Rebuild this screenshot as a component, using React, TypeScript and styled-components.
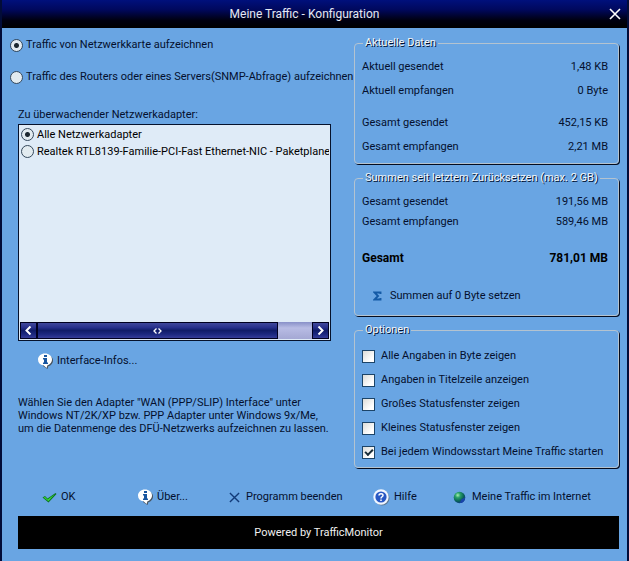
import React from "react";
import styled, { createGlobalStyle } from "styled-components";

const GlobalStyle = createGlobalStyle`
  *, *::before, *::after { box-sizing: border-box; }
  body { margin: 0; background: #69a5e3; }
  body, button, input {
    font-family: Roboto, "Liberation Sans", Arial, sans-serif;
    font-size: 11px;
    line-height: 14px;
    color: #04102e;
  }
`;

const Window = styled.div`
  display: flex;
  flex-direction: column;
  min-height: 100vh;
  border: solid #020c38;
  border-width: 0 2px;
  background: #69a5e3;
`;

const TitleBar = styled.header`
  display: grid;
  grid-template-columns: 4px 1fr 24px;
  align-items: center;
  height: 28px;
  background: linear-gradient(#00107c, #00085c 35%, #000010 72%, #000);
`;

const Title = styled.h1`
  grid-column: 2;
  margin: 0;
  font-size: 12px;
  font-weight: 400;
  text-align: center;
  color: #e4e8f4;
`;

const CloseButton = styled.button`
  display: flex;
  align-items: center;
  justify-content: center;
  height: 20px;
  padding: 0;
  border: 0;
  background: none;
  cursor: pointer;
`;

const Body = styled.main`
  display: grid;
  grid-template-columns: minmax(0, 1fr) 265px;
  column-gap: 8px;
  padding: 8px 8px 0;
`;

const Column = styled.div`
  display: flex;
  flex-direction: column;
  min-width: 0;
`;

const Groups = styled(Column)`
  gap: 7px;
`;

const SourceOption = styled.label`
  display: flex;
  align-items: center;
  gap: 3px;
  height: 18px;
  margin-bottom: 14px;
  white-space: nowrap;
`;

const Radio = styled.input.attrs({ type: "radio" })`
  appearance: none;
  flex: none;
  width: 13px;
  height: 13px;
  margin: 0;
  border: 1px solid #34485c;
  border-radius: 50%;
  background: #e2ebf0;

  &:checked {
    background: radial-gradient(circle, #1c2830 0 2px, #e2ebf0 3px);
  }
`;

const AdapterSection = styled.section`
  display: flex;
  flex-direction: column;
  padding: 0 15px 0 8px;
`;

const AdapterHeading = styled.h2`
  margin: 8px 0 2px;
  font-size: 11px;
  font-weight: 400;
`;

const AdapterBox = styled.div`
  display: flex;
  flex-direction: column;
  height: 217px;
  padding: 1px;
  border: 1px solid #06122c;
  background: #dfebf7;
`;

const AdapterList = styled.div`
  flex: 1;
  overflow: hidden;
`;

const Adapter = styled.label`
  display: flex;
  align-items: center;
  gap: 3px;
  height: 17px;
  padding-left: 1px;
  white-space: nowrap;
  color: #000;
`;

const ScrollBar = styled.div`
  display: grid;
  grid-template-columns: 17px minmax(0, 1fr) 17px;
  height: 17px;
  background: linear-gradient(#8890c8, #b8bce4 35%, #a4a8d4);
`;

const scrollFace = `
  display: flex;
  align-items: center;
  justify-content: center;
  padding: 0;
  border: 1px solid #000020;
  background: linear-gradient(#40489c, #28308c 30%, #101c68 50%, #1c2880 75%, #343c98);
`;

const ScrollButton = styled.button`
  ${scrollFace}
`;

const ScrollThumb = styled.div`
  ${scrollFace}
  width: 241px;
  max-width: 90%;
`;

const Note = styled.p`
  margin: 23px 0 0;
  line-height: 13px;
`;

const CommandButton = styled.button<{ $indent?: number }>`
  display: flex;
  align-items: center;
  gap: 4px;
  height: 24px;
  margin: 0;
  padding: 0 0 0 ${(p) => p.$indent ?? 0}px;
  border: 0;
  background: none;
  white-space: nowrap;
  cursor: pointer;

  svg { flex: none; }
`;

const WideCommand = styled(CommandButton)`
  gap: 6px;
`;

const ResetButton = styled(CommandButton)`
  gap: 8px;
`;

const InterfaceInfo = styled(CommandButton)`
  margin-top: 8px;
`;

const Group = styled.fieldset<{ $pad: string }>`
  min-width: 0;
  margin: 0;
  padding: ${(p) => p.$pad};
  border: 1px solid #b4c3d0;
  border-radius: 4px;
  box-shadow: 1px 1px 0 #040c20;
`;

const Legend = styled.legend`
  margin-left: 1px;
  padding: 0 2px;
  color: #f2f6fa;
  text-shadow: 1px 1px 0 #001030;
`;

const Values = styled.dl<{ $gap?: boolean }>`
  margin: ${(p) => (p.$gap ? "8px 0 0" : "0")};
`;

const ValueRow = styled.div<{ $height: number }>`
  display: flex;
  align-items: center;
  justify-content: space-between;
  height: ${(p) => p.$height}px;

  dd { margin: 0; }
`;

const TotalRow = styled(ValueRow)`
  margin: 14px 0;
  font-size: 12px;
  font-weight: 700;
  color: #000;
`;

const Option = styled.label`
  display: flex;
  align-items: center;
  gap: 6px;
  height: 24px;
`;

const CheckBox = styled.input.attrs({ type: "checkbox" })`
  appearance: none;
  flex: none;
  display: grid;
  place-items: center;
  width: 13px;
  height: 13px;
  margin: 0;
  border: 1px solid #1c4468;
  background: linear-gradient(135deg, #dcdcd8, #fff 75%);

  &:checked::after {
    content: "";
    width: 8px;
    height: 5px;
    margin-bottom: 2px;
    border: solid #182c38;
    border-width: 0 0 2px 2px;
    transform: rotate(-45deg);
  }
`;

const Toolbar = styled.nav`
  display: grid;
  grid-template-columns: 96fr 91fr 144fr 80fr 174fr;
  align-items: center;
  height: 24px;
  margin: 17px 0 7px;
  padding-left: 40px;
`;

const Banner = styled.footer`
  display: flex;
  align-items: center;
  justify-content: center;
  height: 33px;
  margin: 0 8px 12px 16px;
  background: #000;
  color: #f0f0f0;
`;

const CrossIcon = ({ size, color, width }: { size: number; color: string; width: number }) => (
  <svg width={size} height={size} viewBox="0 0 12 12" aria-hidden="true">
    <path d="M1 1 11 11M11 1 1 11" stroke={color} strokeWidth={width} fill="none" />
  </svg>
);

const InfoIcon = () => (
  <svg width="15" height="16" viewBox="0 0 15 16" aria-hidden="true">
    <path d="M8 2C12 2 15 4 15 7.500S12 13 10.500 13L9.500 16 5 13Z" fill="#46535f" />
    <path d="M7 0.500C11 0.500 14 3 14 6.500S11 12 9.500 12.300L8.500 15 5.500 12.300C2 11.800 0 9.800 0 6.500S3 0.500 7 0.500Z" fill="#fff" />
    <path d="M6 2h3v2H6zM5 5h4v4.500h1V11H5V9.500h1v-3H5z" fill="#1856a0" />
  </svg>
);

const CheckIcon = () => (
  <svg width="15" height="12" viewBox="0 0 15 12" aria-hidden="true">
    <path d="M0.500 6.500 3 5 5.500 7.500 13.500 2 14.500 3 6.500 11.500Z" fill="#0b7020" />
    <path d="M1.500 6.500 3 5.700 5.500 8.500 13 3 6.500 10.300Z" fill="#35d437" />
  </svg>
);

const HelpIcon = () => (
  <svg width="17" height="17" viewBox="0 0 17 17" aria-hidden="true">
    <circle cx="9" cy="9" r="7.500" fill="#5c7894" />
    <circle cx="8" cy="8" r="7.700" fill="#f0f6ff" />
    <circle cx="8" cy="8" r="5.600" fill="#2858c4" />
    <path d="M6 6.500C6 4 10.300 4 10 6.500 9.900 7.800 8 7.800 8 9.500M8 10.500v1.500" stroke="#fff" strokeWidth="1.500" fill="none" />
  </svg>
);

const GlobeIcon = () => (
  <svg width="13" height="13" viewBox="0 0 13 13" aria-hidden="true">
    <defs>
      <radialGradient id="globe" cx="0.35" cy="0.3" r="0.75">
        <stop offset="0" stopColor="#a8f0b0" />
        <stop offset="0.3" stopColor="#28a068" />
        <stop offset="0.7" stopColor="#086058" />
        <stop offset="1" stopColor="#103890" />
      </radialGradient>
    </defs>
    <circle cx="6.500" cy="6.500" r="5.800" fill="url(#globe)" />
    <path d="M8 8.500 12 6.500C12 10 10 12 7 12Z" fill="#1844a8" />
  </svg>
);

const SigmaIcon = () => (
  <svg width="9" height="10" viewBox="0 0 9 10" aria-hidden="true">
    <path d="M7.500 3V1.500H1.500L5 5 1.500 8.500H7.500V7" stroke="#145aa6" strokeWidth="1.900" fill="none" />
  </svg>
);

const Arrow = ({ d }: { d: string }) => (
  <svg width="9" height="9" viewBox="0 0 9 9" aria-hidden="true">
    <path d={d} stroke="#fff" strokeWidth="2" fill="none" />
  </svg>
);

const currentValues = [
  ["Aktuell gesendet", "1,48 KB"],
  ["Aktuell empfangen", "0 Byte"],
];
const sessionValues = [
  ["Gesamt gesendet", "452,15 KB"],
  ["Gesamt empfangen", "2,21 MB"],
];
const totals = [
  ["Gesamt gesendet", "191,56 MB"],
  ["Gesamt empfangen", "589,46 MB"],
];
const options = [
  "Alle Angaben in Byte zeigen",
  "Angaben in Titelzeile anzeigen",
  "Großes Statusfenster zeigen",
  "Kleines Statusfenster zeigen",
  "Bei jedem Windowsstart Meine Traffic starten",
];

const rows = (items: string[][], height: number) =>
  items.map(([name, value]) => (
    <ValueRow key={name} $height={height}>
      <dt>{name}</dt>
      <dd>{value}</dd>
    </ValueRow>
  ));

export default function App() {
  return (
    <>
      <GlobalStyle />
      <Window>
        <TitleBar>
          <Title>Meine Traffic - Konfiguration</Title>
          <CloseButton aria-label="Schließen">
            <CrossIcon size={12} color="#fff" width={1.6} />
          </CloseButton>
        </TitleBar>

        <Body>
          <Column>
            <SourceOption>
              <Radio name="source" defaultChecked />
              Traffic von Netzwerkkarte aufzeichnen
            </SourceOption>
            <SourceOption>
              <Radio name="source" />
              Traffic des Routers oder eines Servers(SNMP-Abfrage) aufzeichnen
            </SourceOption>

            <AdapterSection>
              <AdapterHeading id="adapters">Zu überwachender Netzwerkadapter:</AdapterHeading>
              <AdapterBox role="radiogroup" aria-labelledby="adapters">
                <AdapterList>
                  <Adapter>
                    <Radio name="adapter" defaultChecked />
                    Alle Netzwerkadapter
                  </Adapter>
                  <Adapter>
                    <Radio name="adapter" />
                    Realtek RTL8139-Familie-PCI-Fast Ethernet-NIC - Paketplaner
                  </Adapter>
                </AdapterList>
                <ScrollBar>
                  <ScrollButton aria-label="Nach links">
                    <Arrow d="M6.500 0.500 2.500 4.500 6.500 8.500" />
                  </ScrollButton>
                  <ScrollThumb>
                    <svg width="9" height="6" viewBox="0 0 9 6" aria-hidden="true">
                      <path d="M3.500 0.500 1 3 3.500 5.500M5.500 0.500 8 3 5.500 5.500" stroke="#fff" strokeWidth="1.300" fill="none" />
                    </svg>
                  </ScrollThumb>
                  <ScrollButton aria-label="Nach rechts">
                    <Arrow d="M2.500 0.500 6.500 4.500 2.500 8.500" />
                  </ScrollButton>
                </ScrollBar>
              </AdapterBox>
              <InterfaceInfo $indent={20}>
                <InfoIcon />
                Interface-Infos...
              </InterfaceInfo>
              <Note>
                Wählen Sie den Adapter "WAN (PPP/SLIP) Interface" unter
                <br />
                Windows NT/2K/XP bzw. PPP Adapter unter Windows 9x/Me,
                <br />
                um die Datenmenge des DFÜ-Netzwerks aufzeichnen zu lassen.
              </Note>
            </AdapterSection>
          </Column>

          <Groups>
            <Group $pad="5px 10px 4px 7px">
              <Legend>Aktuelle Daten</Legend>
              <Values>{rows(currentValues, 24)}</Values>
              <Values $gap>{rows(sessionValues, 24)}</Values>
            </Group>

            <Group $pad="7px 10px 7px 7px">
              <Legend>Summen seit letztem Zurücksetzen (max. 2 GB)</Legend>
              <Values>
                {rows(totals, 20)}
                <TotalRow $height={24}>
                  <dt>Gesamt</dt>
                  <dd>781,01 MB</dd>
                </TotalRow>
              </Values>
              <ResetButton $indent={11}>
                <SigmaIcon />
                Summen auf 0 Byte setzen
              </ResetButton>
            </Group>

            <Group $pad="7px 10px 3px 7px">
              <Legend>Optionen</Legend>
              {options.map((text, index) => (
                <Option key={text}>
                  <CheckBox defaultChecked={index === options.length - 1} />
                  {text}
                </Option>
              ))}
            </Group>
          </Groups>
        </Body>

        <Toolbar>
          <CommandButton><CheckIcon />OK</CommandButton>
          <CommandButton><InfoIcon />Über...</CommandButton>
          <WideCommand><CrossIcon size={11} color="#123a78" width={1.5} />Programm beenden</WideCommand>
          <CommandButton><HelpIcon />Hilfe</CommandButton>
          <WideCommand><GlobeIcon />Meine Traffic im Internet</WideCommand>
        </Toolbar>

        <Banner>Powered by TrafficMonitor</Banner>
      </Window>
    </>
  );
}
